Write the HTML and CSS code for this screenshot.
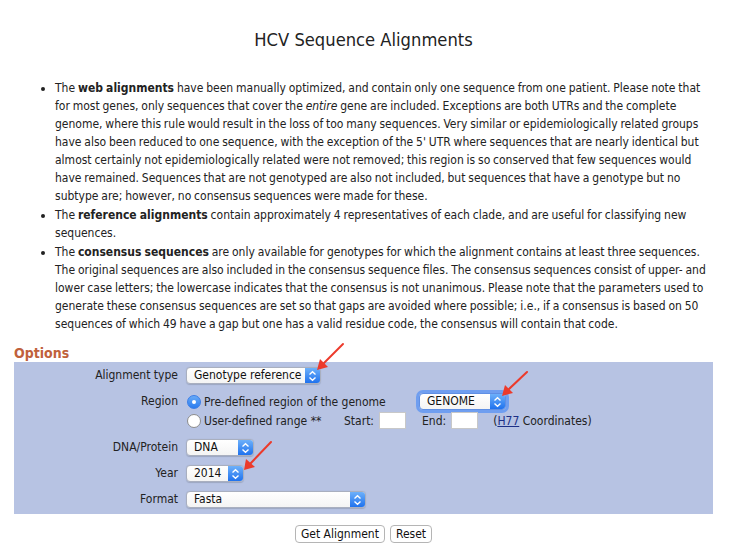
FILE: index.html
```html
<!DOCTYPE html>
<html>
<head>
<meta charset="utf-8">
<link rel="stylesheet" href="styles.css">
</head>
<body>
<div class="page">
  <h1 class="title">HCV Sequence Alignments</h1>
  <ul class="notes">
    <li>The <b>web alignments</b> have been manually optimized, and contain only one sequence from one patient. Please note that for most genes, only sequences that cover the <i>entire</i> gene are included. Exceptions are both UTRs and the complete genome, where this rule would result in the loss of too many sequences. Very similar or epidemiologically related groups have also been reduced to one sequence, with the exception of the 5' UTR where sequences that are nearly identical but almost certainly not epidemiologically related were not removed; this region is so conserved that few sequences would have remained. Sequences that are not genotyped are also not included, but sequences that have a genotype but no subtype are; however, no consensus sequences were made for these.</li>
    <li>The <b>reference alignments</b> contain approximately 4 representatives of each clade, and are useful for classifying new sequences.</li>
    <li>The <b>consensus sequences</b> are only available for genotypes for which the alignment contains at least three sequences. The original sequences are also included in the consensus sequence files. The consensus sequences consist of upper- and lower case letters; the lowercase indicates that the consensus is not unanimous. Please note that the parameters used to generate these consensus sequences are set so that gaps are avoided where possible; i.e., if a consensus is based on 50 sequences of which 49 have a gap but one has a valid residue code, the consensus will contain that code.</li>
  </ul>
  <h2 class="options-title">Options</h2>
  <div class="panel">
    <div class="label">Alignment type</div>
    <div class="field">
      <div class="select w-type"><span class="sel-text">Genotype reference</span><span class="sel-btn"><svg width="9" height="12" viewBox="0 0 9 12"><path d="M1.5 4.5 L4.5 1.8 L7.5 4.5 M1.5 7.5 L4.5 10.2 L7.5 7.5" fill="none" stroke="#fff" stroke-width="1.4"/></svg></span></div>
    </div>

    <div class="label region-label">Region</div>
    <div class="field region">
      <div class="region-line">
        <span class="radio on"></span><span class="radio-text w-pre">Pre-defined region of the genome</span>
        <div class="select focus w-genome"><span class="sel-text">GENOME</span><span class="sel-btn"><svg width="9" height="12" viewBox="0 0 9 12"><path d="M1.5 4.5 L4.5 1.8 L7.5 4.5 M1.5 7.5 L4.5 10.2 L7.5 7.5" fill="none" stroke="#fff" stroke-width="1.4"/></svg></span></div>
      </div>
      <div class="region-line second">
        <span class="radio"></span><span class="radio-text w-user">User-defined range **</span>
        <span class="small-label">Start:</span><span class="textbox"></span>
        <span class="small-label end">End:</span><span class="textbox"></span>
        <span class="coords">(<a class="link">H77</a> Coordinates)</span>
      </div>
    </div>

    <div class="label">DNA/Protein</div>
    <div class="field">
      <div class="select w-dna"><span class="sel-text">DNA</span><span class="sel-btn"><svg width="9" height="12" viewBox="0 0 9 12"><path d="M1.5 4.5 L4.5 1.8 L7.5 4.5 M1.5 7.5 L4.5 10.2 L7.5 7.5" fill="none" stroke="#fff" stroke-width="1.4"/></svg></span></div>
    </div>

    <div class="label year-row">Year</div>
    <div class="field year-row">
      <div class="select w-year"><span class="sel-text">2014</span><span class="sel-btn"><svg width="9" height="12" viewBox="0 0 9 12"><path d="M1.5 4.5 L4.5 1.8 L7.5 4.5 M1.5 7.5 L4.5 10.2 L7.5 7.5" fill="none" stroke="#fff" stroke-width="1.4"/></svg></span></div>
    </div>

    <div class="label format-row">Format</div>
    <div class="field format-row">
      <div class="select w-format"><span class="sel-text">Fasta</span><span class="sel-btn"><svg width="9" height="12" viewBox="0 0 9 12"><path d="M1.5 4.5 L4.5 1.8 L7.5 4.5 M1.5 7.5 L4.5 10.2 L7.5 7.5" fill="none" stroke="#fff" stroke-width="1.4"/></svg></span></div>
    </div>
  </div>
  <div class="buttons">
    <span class="button">Get Alignment</span>
    <span class="button">Reset</span>
  </div>
</div>
<svg class="arrows" width="734" height="555" viewBox="0 0 734 555">
  <g stroke="#ec3a2b" stroke-width="2" fill="#ec3a2b" stroke-linecap="round">
    <line x1="343" y1="344" x2="324" y2="363"/>
    <polygon points="317,370 320,359 328,367" stroke="none"/>
    <line x1="527" y1="372" x2="508" y2="390"/>
    <polygon points="502,396 505,385 513,393" stroke="none"/>
    <line x1="271" y1="442" x2="250" y2="464"/>
    <polygon points="244,470 246,459 255,467" stroke="none"/>
  </g>
</svg>
</body>
</html>
```
FILE: styles.css
```css
html, body {
  margin: 0;
  padding: 0;
  background: #fff;
}
body {
  font-family: "DejaVu Sans Condensed", "DejaVu Sans", sans-serif;
  font-size: 12px;
  color: #222;
  position: relative;
}
.page {
  width: 699px;
  margin-left: 14px;
  padding-top: 28px;
}
.title {
  margin: 0;
  text-align: center;
  font-weight: normal;
  font-size: 18.2px;
  line-height: 24px;
  color: #222;
}
.notes {
  margin: 27px 0 0 0;
  padding-left: 41px;
  line-height: 18px;
  word-spacing: -0.6px;
}
.notes li {
  margin-bottom: 1px;
}
.options-title {
  margin: 11px 0 0 0;
  font-size: 14px;
  line-height: 18px;
  font-weight: bold;
  color: #c0613b;
}
.panel {
  background: #b7c3e3;
  display: grid;
  grid-template-columns: 164px 1fr;
  column-gap: 8px;
  row-gap: 8px;
  padding: 5px 0 6px 0;
}
.label {
  text-align: right;
  line-height: 17px;
  height: 17px;
}
.year-row {
  margin-top: 1px;
}
.format-row {
  margin-top: 1px;
}
.field {
  display: flex;
  align-items: center;
  min-height: 17px;
}
.region {
  display: flex;
  flex-direction: column;
  align-items: flex-start;
  gap: 2px;
  padding-top: 1px;
  padding-bottom: 2px;
}
.label.region-label {
  padding-top: 1px;
}
.region-line {
  display: flex;
  align-items: center;
  height: 17px;
}
.region-line.second {
  height: 17px;
}
.radio {
  width: 12px;
  height: 12px;
  border-radius: 50%;
  border: 1px solid #8c8c8c;
  background: #fff;
  position: relative;
  margin-left: 1px;
  flex: none;
}
.radio.on {
  border-color: #3a7ee8;
  background: linear-gradient(#68aaf7, #2a7cef);
}
.radio.on::after {
  content: "";
  position: absolute;
  left: 4px;
  top: 4px;
  width: 4px;
  height: 4px;
  border-radius: 50%;
  background: #fff;
}
.radio-text {
  margin-left: 3px;
}
.w-pre { width: 215px; }
.w-user { width: 140px; }
.small-label { margin-right: 5px; }
.small-label.end { margin-left: 16px; }
.textbox {
  width: 25px;
  height: 15px;
  background: #fff;
  border: 1px solid #c8c8c8;
  display: inline-block;
}
.coords { margin-left: 15px; }
.link {
  color: #1c2f86;
  text-decoration: underline;
}
.select {
  height: 17px;
  box-sizing: border-box;
  display: flex;
  border: 1px solid #a9afbf;
  border-radius: 4px;
  background: linear-gradient(#ffffff, #f4f4f4);
  overflow: hidden;
  box-shadow: 0 0.5px 1px rgba(0,0,0,0.15);
}
.select.focus {
  box-shadow: 0 0 0 3px #6f9ef0;
  border-color: #5f8fe4;
}
.sel-text {
  flex: 1;
  padding-left: 7px;
  line-height: 15px;
  color: #111;
}
.sel-btn {
  width: 15px;
  display: flex;
  align-items: center;
  justify-content: center;
  background: linear-gradient(#6db0fa, #1f72ee);
}
.w-type { width: 135px; }
.w-genome { width: 87px; }
.w-dna { width: 68px; }
.w-year { width: 58px; }
.w-format { width: 180px; }
.buttons {
  display: flex;
  justify-content: center;
  gap: 5px;
  margin-top: 11px;
}
.button {
  height: 18px;
  line-height: 16px;
  box-sizing: border-box;
  padding: 0 5px;
  border: 1px solid #b5b5b5;
  border-radius: 4px;
  background: #fff;
  color: #111;
}
.arrows {
  position: absolute;
  left: 0;
  top: 0;
  pointer-events: none;
}
```
